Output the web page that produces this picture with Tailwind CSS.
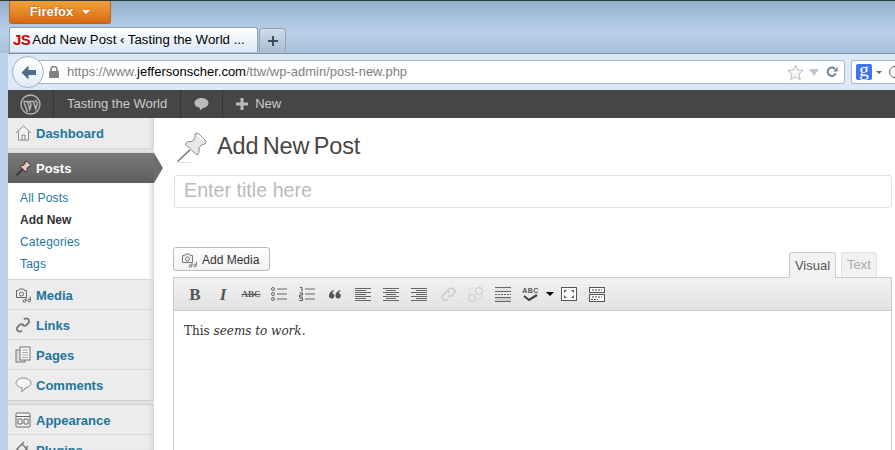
<!DOCTYPE html>
<html lang="en">
<head>
    <meta charset="UTF-8">
    <title>Add New Post</title>
    <script src="https://cdn.jsdelivr.net/npm/@tailwindcss/browser@4"></script>
</head>
<body class="w-[895px] h-[450px] overflow-hidden bg-white font-['Liberation_Sans',Arial,sans-serif]">
<div class="w-[895px] h-[450px] flex flex-col overflow-hidden border-t border-[#2c3a3a] bg-[#bcd2ea]">

    <!-- Firefox chrome -->
    <div class="h-[52px] shrink-0 pl-[9px] flex flex-col bg-gradient-to-b from-[#95b0cc] via-[#b9d0ea] via-60% to-[#a9c0da]">
        <div class="w-[102px] h-[23px] rounded-b-[3px] border border-t-0 border-[#a9692a] bg-gradient-to-b from-[#f0a23c] to-[#d8690f] flex items-center justify-center gap-[9px] text-white font-bold text-[13px]">
            <span class="[text-shadow:0_0_2px_#8a4a10]">Firefox</span>
            <span class="w-0 h-0 border-x-[4px] border-x-transparent border-t-[4px] border-t-white"></span>
        </div>
        <div class="flex items-end mt-[3px] gap-px h-[25px]">
            <div class="w-[249px] h-[25px] rounded-t-[3px] border border-b-0 border-[#8ea3b8] bg-gradient-to-b from-white to-[#dbe8f7] flex items-center pl-[3px] text-[13.25px] text-black whitespace-nowrap overflow-hidden">
                <span class="font-bold text-[#d00000] text-[15px] mr-[2px] tracking-[-0.5px]">JS</span>
                <span>Add New Post ‹ Tasting the World ...</span>
            </div>
            <div class="w-[27px] h-[24px] rounded-t-[3px] border border-b-0 border-[#8ea3b8] bg-gradient-to-b from-[#d0dce8] to-[#a9bccf] flex items-center justify-center">
                <svg width="10" height="10" viewBox="0 0 10 10"><path d="M4 0h2v4h4v2H6v4H4V6H0V4h4z" fill="#3c4c5e"/></svg>
            </div>
        </div>
    </div>

    <!-- Nav bar -->
    <div class="h-[37px] shrink-0 ml-[8px] border-t border-[#7f8fa0] bg-[#dbe8f8] flex items-center pl-[4px] relative">
        <div class="w-[32px] h-[32px] rounded-full border border-[#a5b4c6] bg-gradient-to-b from-white to-[#e2ebf6] flex items-center justify-center z-10 shrink-0">
            <svg width="15" height="15" viewBox="0 0 15 15"><path d="M7.500.5L.5 7.500l7 7V10H15V5H7.500z" fill="#4d6a88"/></svg>
        </div>
        <div class="w-[817px] h-[24px] -ml-[16px] pl-[16px] pr-[6px] border border-[#a9b9cb] rounded-r-[2px] bg-white flex items-center text-[13px] whitespace-nowrap text-[#808080] shrink-0">
            <svg width="10" height="12" viewBox="0 0 10 12" class="mr-[8px] ml-[4px]"><path d="M2 5V3.500a3 3 0 0 1 6 0V5" fill="none" stroke="#808080" stroke-width="1.600"/><rect x="0" y="5" width="10" height="7" rx="1" fill="#808080"/></svg>
            <span>https://www.<span class="text-black">jeffersonscher.com</span>/ttw/wp-admin/post-new.php</span>
            <span class="ml-auto flex items-center">
                <svg width="17" height="17" viewBox="0 0 17 17" class="mr-[5px]"><path d="M8.500 1l2.200 5 5.300.5-4 3.600 1.200 5.400-4.700-2.800-4.700 2.800 1.200-5.400-4-3.600 5.300-.5z" fill="#f6f6f6" stroke="#b8bcc0"/></svg>
                <span class="w-0 h-0 mr-[7px] border-x-[5px] border-x-transparent border-t-[7px] border-t-[#b9c6d4]"></span>
                <svg width="12" height="12" viewBox="0 0 13 13"><path d="M10.500 8a4.500 4.500 0 1 1-1-5" fill="none" stroke="#6d8298" stroke-width="2.200"/><path d="M12.500 1v5h-5z" fill="#6d8298"/></svg>
            </span>
        </div>
        <div class="ml-[6px] flex-1 h-[24px] pl-[4px] border border-r-0 border-[#a9b9cb] rounded-l-[2px] bg-white flex items-center overflow-hidden">
            <span class="w-[16px] h-[16px] rounded-[2px] bg-[#3f74f0] text-white text-[19px] font-['Liberation_Serif',serif] leading-[12px] text-center shrink-0">g</span>
            <span class="ml-[4px] w-0 h-0 border-x-[3px] border-x-transparent border-t-[3px] border-t-[#666] shrink-0"></span>
            <span class="ml-[7px] w-[12px] h-[12px] rounded-full border border-[#666] shrink-0"></span>
        </div>
    </div>

    <!-- Page viewport -->
    <div class="flex-1 ml-[8px] bg-white flex flex-col min-h-0">
        <!-- Admin bar -->
        <div class="h-[28px] shrink-0 bg-[#464646] flex items-center text-[#cccccc] text-[13px]">
            <div class="w-[46px] h-full border-r border-[#333] flex items-center justify-center">
                <svg width="21" height="21" viewBox="0 0 21 21"><circle cx="10.500" cy="10.500" r="9.500" fill="none" stroke="#b4b4b4" stroke-width="1.400"/><path d="M3.300 7.500h5.200l-1 .5 2.300 7.500 1.200-4-1-3.500-.8-.5h5.200l-1 .5 2.300 7 1.500-5c.3-1-.3-2-1-2.500-1-.5-.5-1 0-1.500" fill="none" stroke="#b4b4b4" stroke-width="1.500"/><path d="M4 8.500l3.500 9.500" stroke="#b4b4b4" stroke-width="1.500"/></svg>
            </div>
            <div class="h-full px-[13px] border-r border-[#333] flex items-center">Tasting the World</div>
            <div class="w-[42px] h-full border-r border-[#333] flex items-center justify-center">
                <svg width="15" height="14" viewBox="0 0 15 14"><path d="M7.500 1c3.900 0 7 2.200 7 5s-3.100 5-6 5c-.5 1-1.500 2-3 2.500.5-1 .6-2 .4-2.700C3 10.300.5 8.500.5 6c0-2.800 3.100-5 7-5z" fill="#bbb"/></svg>
            </div>
            <div class="pl-[13px] flex items-center gap-[7px]">
                <svg width="12" height="12" viewBox="0 0 12 12"><path d="M4.500 0h3v4.500H12v3H7.500V12h-3V7.500H0v-3h4.500z" fill="#bbb"/></svg>
                <span>New</span>
            </div>
        </div>

        <div class="flex-1 flex min-h-0">
            <!-- Sidebar -->
            <nav class="w-[146px] shrink-0 overflow-visible bg-[#ececec] shadow-[inset_-5px_0_5px_-3px_#d0d0d0] flex flex-col text-[13px] font-bold text-[#21759b]">
                <a class="h-[30px] shrink-0 pt-[2px] flex items-center pl-[28px] relative">
                    <svg class="absolute left-[7px] top-[6px]" width="17" height="17" viewBox="0 0 17 17"><path d="M1 9l7.500-7 7.500 7M3.500 7.500V16h10V7.500M7 16v-5h3v5" fill="#f4f4f4" stroke="#888"/></svg>
                    Dashboard
                </a>
                <div class="h-[5px] shrink-0 border-y border-[#d8d8d8] bg-[#e2e2e2]"></div>
                <a class="h-[30px] shrink-0 pt-[2px] bg-gradient-to-b from-[#7a7a7a] to-[#5f5f5f] text-white flex items-center pl-[28px] relative">
                    <svg class="absolute left-[7px] top-[6px]" width="18" height="18" viewBox="0 0 36 36"><path d="M20 5Q22 3 24 5L30 11Q32 13 30 15L27 15.500 24 19Q25 24 22 26L10 15Q12 12 17 12.500L20 9Z" fill="#ecc8c0" stroke="#3a2a2a" stroke-width="2"/><path d="M15 21L3 33" stroke="#2a2a2a" stroke-width="3"/></svg>
                    Posts
                    <span class="absolute left-full top-0 w-0 h-0 border-y-[15px] border-y-transparent border-l-[9px] border-l-[#6c6c6c] z-10"></span>
                </a>
                <div class="h-[96px] shrink-0 bg-white shadow-[inset_-5px_0_5px_-3px_#d0d0d0] flex flex-col pt-[4px] pl-[12px] font-normal text-[12px] tracking-[0.2px]">
                    <a class="h-[22px] shrink-0 flex items-center">All Posts</a>
                    <a class="h-[22px] shrink-0 flex items-center font-bold text-[#333] tracking-normal">Add New</a>
                    <a class="h-[22px] shrink-0 flex items-center">Categories</a>
                    <a class="h-[22px] shrink-0 flex items-center">Tags</a>
                </div>
                <a class="h-[31px] shrink-0 pt-[3px] border-t border-[#d8d8d8] border-b flex items-center pl-[28px] relative">
                    <svg class="absolute left-[7px] top-[7px]" width="16" height="16" viewBox="0 0 16 16"><path d="M1.500 3.500h2l1-1.500h4l1 1.500h2v7h-10z" fill="#f2f2f2" stroke="#666"/><circle cx="6.500" cy="7" r="2" fill="none" stroke="#666"/><circle cx="9.500" cy="14" r="1.300" fill="none" stroke="#666"/><circle cx="14" cy="13.500" r="1.300" fill="none" stroke="#666"/><path d="M11 13.500V10M15.300 13V9.500" stroke="#666"/></svg>
                    Media
                </a>
                <a class="h-[30px] shrink-0 pt-[2px] border-b border-[#d8d8d8] flex items-center pl-[28px] relative">
                    <svg class="absolute left-[6px] top-[6px]" width="18" height="18" viewBox="0 0 18 18"><path d="M10 3.500a2.800 2.800 0 0 1 4-.500 2.800 2.800 0 0 1 .5 4l-2 2a2.800 2.800 0 0 1-4 0M8 14.500a2.800 2.800 0 0 1-4 .5 2.800 2.800 0 0 1-.5-4l2-2a2.800 2.800 0 0 1 4 0" fill="none" stroke="#777" stroke-width="1.800"/></svg>
                    Links
                </a>
                <a class="h-[30px] shrink-0 pt-[2px] border-b border-[#d8d8d8] flex items-center pl-[28px] relative">
                    <svg class="absolute left-[7px] top-[6px]" width="16" height="17" viewBox="0 0 16 17"><rect x="1" y="4" width="9" height="12" fill="#ddd" stroke="#777"/><rect x="5" y="1" width="10" height="13" fill="#f6f6f6" stroke="#777"/><path d="M7 4h6M7 6.500h6M7 9h6M7 11.500h6" stroke="#aaa"/></svg>
                    Pages
                </a>
                <a class="h-[30px] shrink-0 pt-[2px] flex items-center pl-[28px] relative">
                    <svg class="absolute left-[7px] top-[7px]" width="17" height="16" viewBox="0 0 17 16"><path d="M8.500 1c4.200 0 7.500 2.300 7.500 5s-3 5-6 5c-.5 1.500-1.500 3-3.500 3.500.7-1 .9-2.400.7-3.700C3.500 10.300 1 8.500 1 6c0-2.700 3.300-5 7.500-5z" fill="#f6f6f6" stroke="#888"/></svg>
                    Comments
                </a>
                <div class="h-[5px] shrink-0 border-y border-[#d0d0d0] bg-[#e0e0e0]"></div>
                <a class="h-[30px] shrink-0 pt-[2px] border-b border-[#d8d8d8] flex items-center pl-[28px] relative">
                    <svg class="absolute left-[7px] top-[7px]" width="16" height="16" viewBox="0 0 16 16"><rect x="1" y="1" width="14" height="14" rx="1" fill="#f6f6f6" stroke="#666"/><path d="M1 4.500h14M3 7h4v5H3zM9 7h4v5H9z" fill="none" stroke="#666"/></svg>
                    Appearance
                </a>
                <a class="h-[30px] shrink-0 pt-[2px] flex items-center pl-[28px] relative">
                    <svg class="absolute left-[7px] top-[5px]" width="16" height="16" viewBox="0 0 16 16"><path d="M2 9l5-5 5 5-3 3H5zM9 2L6 5M13 6l-3 3" fill="none" stroke="#777" stroke-width="1.500"/></svg>
                    Plugins
                </a>
            </nav>

            <!-- Main content -->
            <main class="flex-1 min-w-0 pl-[20px] pr-[3px] flex flex-col">
                <div class="flex items-center h-[57px] pt-[1px] shrink-0 ml-[1px]">
                    <svg width="36" height="36" viewBox="0 0 36 36" class="shrink-0"><path d="M20 5Q22 3 24 5L30 11Q32 13 30 15L27 15.500 24 19Q25 24 22 26L10 15Q12 12 17 12.500L20 9Z" fill="#e8e8e8" stroke="#8a8a8a"/><path d="M23 6l6 6" stroke="#fff" stroke-width="2"/><path d="M15 21L2.500 32.500" stroke="#777" stroke-width="1.600"/><path d="M2 33.500h14" stroke="#ddd"/></svg>
                    <h1 class="ml-[6px] text-[23.5px] text-[#464646] font-normal tracking-[-0.15px] [word-spacing:-2px]">Add New Post</h1>
                </div>
                <div class="h-[33px] shrink-0 border border-[#dfdfdf] rounded-[3px] bg-white flex items-center pl-[9px] pb-[2px] text-[19.7px] text-[#bbbbbb]">Enter title here</div>
                <div class="h-[69px] shrink-0 flex items-end justify-between">
                    <button class="h-[24px] w-[97px] -ml-[1px] mb-[6px] pt-[1px] border border-[#bbbbbb] rounded-[3px] bg-gradient-to-b from-white to-[#f2f2f2] flex items-center pl-[7px] gap-[5px] text-[12px] text-[#333]">
                        <svg width="16" height="16" viewBox="0 0 16 16"><path d="M1.500 3.500h2l1-1.500h4l1 1.500h2v7h-10z" fill="#f2f2f2" stroke="#777"/><circle cx="6.500" cy="7" r="2" fill="none" stroke="#777"/><circle cx="9.500" cy="14" r="1.300" fill="none" stroke="#777"/><circle cx="14" cy="13.500" r="1.300" fill="none" stroke="#777"/><path d="M11 13.500V10M15.300 13V9.500" stroke="#777"/></svg>
                        Add Media
                    </button>
                    <div class="flex items-end gap-[5px] mr-[15px]">
                        <div class="w-[47px] h-[26px] border border-b-0 border-[#cccccc] rounded-t-[3px] bg-[#f2f2f2] text-[13px] text-[#555] flex items-center justify-center relative top-[1px]">Visual</div>
                        <div class="w-[36px] h-[25px] border border-b-0 border-[#dfdfdf] rounded-t-[3px] bg-[#f1f1f1] text-[13px] text-[#aaa] flex items-center justify-center">Text</div>
                    </div>
                </div>
                <div class="flex-1 -ml-[1px] border border-[#cccccc] border-b-0 flex flex-col">
                    <!-- Toolbar: 28px cells -->
                    <div class="h-[33px] shrink-0 border-b border-[#cccccc] bg-gradient-to-b from-[#f2f2f2] to-[#e2e2e2] flex items-center pl-[7px] text-[#555]">
                        <span class="w-[28px] flex justify-center font-['Liberation_Serif',serif] font-bold text-[17px] leading-none">B</span>
                        <span class="w-[28px] flex justify-center font-['Liberation_Serif',serif] italic font-bold text-[17px] leading-none">I</span>
                        <span class="w-[28px] flex justify-center font-['Liberation_Serif',serif] text-[9px] font-bold line-through leading-none">ABC</span>
                        <span class="w-[28px] flex justify-center"><svg width="16" height="14" viewBox="0 0 16 14"><g fill="none" stroke="#666"><circle cx="2" cy="2" r="1.500"/><circle cx="2" cy="7" r="1.500"/><circle cx="2" cy="12" r="1.500"/><path d="M6 2h10M6 7h10M6 12h10"/></g></svg></span>
                        <span class="w-[28px] flex justify-center"><svg width="16" height="14" viewBox="0 0 16 14"><path d="M1 .5h2v4M.5 6h3v2h-3v2h3M.5 11h3v2.500h-3" fill="none" stroke="#555"/><path d="M6 2h10M6 7h10M6 12h10" stroke="#666"/></svg></span>
                        <span class="w-[28px] flex justify-center"><svg width="12" height="9" viewBox="0 0 12 9"><path d="M4.500 0C2 1.200 0 3 0 5.500a2.700 2.700 0 1 0 3.200-2.300c.2-1 .8-1.800 1.800-2.500zM11 0C8.500 1.200 6.500 3 6.500 5.500a2.700 2.700 0 1 0 3.200-2.300c.2-1 .8-1.800 1.800-2.500z" fill="#555"/></svg></span>
                        <span class="w-[28px] flex justify-center"><svg width="16" height="13" viewBox="0 0 16 13"><path d="M0 .5h16M0 2.500h11M0 4.500h16M0 6.500h11M0 8.500h16M0 10.500h11M0 12.500h16" stroke="#666"/></svg></span>
                        <span class="w-[28px] flex justify-center"><svg width="16" height="13" viewBox="0 0 16 13"><path d="M0 .5h16M3 2.500h10M0 4.500h16M3 6.500h10M0 8.500h16M3 10.500h10M0 12.500h16" stroke="#666"/></svg></span>
                        <span class="w-[28px] flex justify-center"><svg width="16" height="13" viewBox="0 0 16 13"><path d="M0 .5h16M5 2.500h11M0 4.500h16M5 6.500h11M0 8.500h16M5 10.500h11M0 12.500h16" stroke="#666"/></svg></span>
                        <span class="w-[28px] flex justify-center"><svg width="17" height="17" viewBox="0 0 17 17"><path d="M9 5a3 3 0 0 1 4.500-2.500 3 3 0 0 1 2 4.500L13 9.500a3 3 0 0 1-4 0M9 12.500a3 3 0 0 1-5 1 3 3 0 0 1 0-4.500L6.500 6.500a3 3 0 0 1 4 0" fill="none" stroke="#cfcfcf" stroke-width="1.800"/></svg></span>
                        <span class="w-[28px] flex justify-center"><svg width="17" height="17" viewBox="0 0 17 17"><g fill="none" stroke="#d2d2d2" stroke-width="1.600"><circle cx="12" cy="5" r="3.500"/><circle cx="5" cy="12" r="3.500"/></g><path d="M2 2l3 3M6 1v2M1 6h2M14 11l2 2M11 15l1-2M16 10h-2" stroke="#d2d2d2"/></svg></span>
                        <span class="w-[28px] flex justify-center"><svg width="16" height="15" viewBox="0 0 16 15"><rect y="1" width="16" height="3" fill="#e4e4e4"/><rect y="11" width="16" height="3" fill="#cfcfcf"/><path d="M0 .5h16M0 4.500h16M0 10.500h16M0 14.500h16" stroke="#666"/><path d="M0 7.500h16" stroke="#666" stroke-dasharray="2 1"/></svg></span>
                        <span class="w-[27px] flex flex-col items-center leading-none text-[7px] font-bold text-[#555] tracking-[0.5px]">ABC<svg width="16" height="8" viewBox="0 0 16 8"><path d="M1 2l5 4 8-5" fill="none" stroke="#444" stroke-width="2.200"/></svg></span>
                        <span class="w-[11px] flex justify-center"><span class="w-0 h-0 border-x-[4px] border-x-transparent border-t-[4px] border-t-black"></span></span>
                        <span class="w-[28px] flex justify-center"><svg width="16" height="14" viewBox="0 0 16 14"><rect x=".5" y=".5" width="15" height="13" fill="#fff" stroke="#555"/><path d="M3 3h3L3 6zM13 3h-3l3 3zM3 11h3L3 8zM13 11h-3l3-3z" fill="#555"/></svg></span>
                        <span class="w-[28px] flex justify-center"><svg width="16" height="15" viewBox="0 0 16 15"><rect x=".5" y=".5" width="15" height="5" fill="#fff" stroke="#555"/><rect x=".5" y="7.500" width="15" height="7" fill="#fff" stroke="#555"/><path d="M3 3h10M3 10h10M2 12.500h7" stroke="#444" stroke-dasharray="2 1"/></svg></span>
                    </div>
                    <div class="flex-1 bg-white pl-[10px] pt-[10px] font-['DejaVu_Serif',serif] text-[12px] leading-[20px] text-[#333]">This <em>seems to work</em>.</div>
                </div>
            </main>
        </div>
    </div>
</div>
</body>
</html>
